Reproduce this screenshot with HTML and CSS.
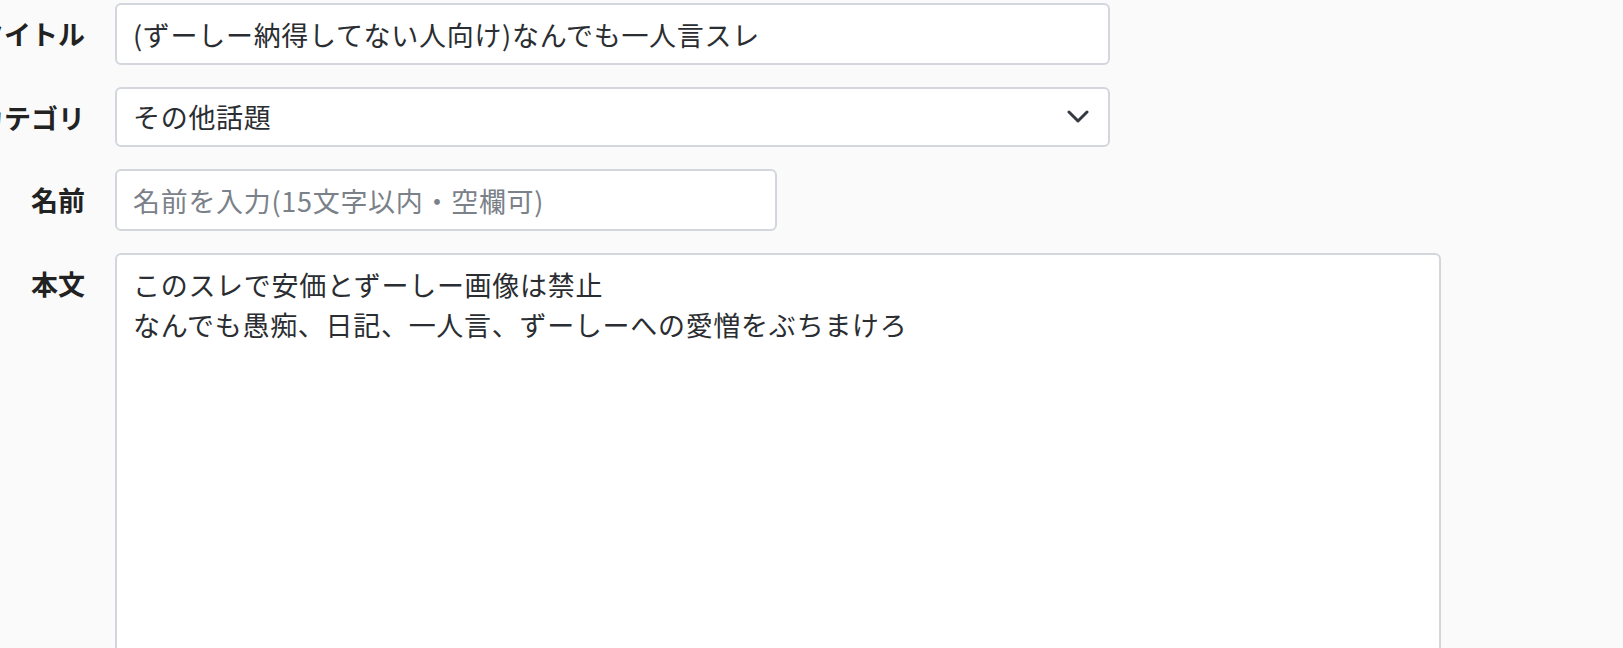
FILE: index.html
```html
<!DOCTYPE html>
<html lang="ja">
<head>
<meta charset="utf-8">
<title>スレ作成</title>
<link rel="stylesheet" href="styles.css">
</head>
<body>
<form class="form">
  <div class="row">
    <label class="label" for="title"><span>タイトル</span></label>
    <input id="title" class="control control-wide" type="text" value="(ずーしー納得してない人向け)なんでも一人言スレ">
  </div>
  <div class="row">
    <label class="label" for="cat"><span>カテゴリ</span></label>
    <div class="select-wrap control-wide">
      <select id="cat" class="control control-select">
        <option>その他話題</option>
      </select>
      <svg class="chevron" width="22" height="13" viewBox="0 0 22 13"><path d="M2 2 L11 11 L20 2" fill="none" stroke="#343a40" stroke-width="3" stroke-linecap="round" stroke-linejoin="round"/></svg>
    </div>
  </div>
  <div class="row">
    <label class="label" for="name"><span>名前</span></label>
    <input id="name" class="control control-name" type="text" placeholder="名前を入力(15文字以内・空欄可)">
  </div>
  <div class="row">
    <label class="label" for="body"><span>本文</span></label>
    <textarea id="body" class="control control-area">このスレで安価とずーしー画像は禁止
なんでも愚痴、日記、一人言、ずーしーへの愛憎をぶちまけろ</textarea>
  </div>
</form>
</body>
</html>
```

FILE: styles.css
```css
html, body {
  margin: 0;
  padding: 0;
  background: #fafafa;
  overflow: hidden;
}

body {
  font-family: "Noto Sans CJK JP", "Noto Sans", sans-serif;
  color: #212529;
}

.form {
  display: flex;
  flex-direction: column;
  gap: 22px;
  padding-top: 3px;
}

.row {
  display: flex;
  align-items: flex-start;
  gap: 30px;
}

.label {
  width: 85px;
  flex-shrink: 0;
  display: flex;
  justify-content: flex-end;
  white-space: nowrap;
  font-size: 27px;
  font-weight: 700;
  line-height: 40px;
  padding-top: 11px;
  color: #222;
}

.control {
  box-sizing: border-box;
  font-family: "Noto Sans CJK JP", "Noto Sans", sans-serif;
  font-size: 27px;
  letter-spacing: 0.7px;
  line-height: 40px;
  color: #2a2d31;
  background: #fff;
  border: 2px solid #d3d6dc;
  border-radius: 6px;
  padding: 9px 16px;
  height: 62px;
  margin: 0;
  outline: none;
}

.control::placeholder {
  color: #7b8189;
  opacity: 1;
}

.control-wide {
  width: 995px;
}

.select-wrap {
  position: relative;
  flex-shrink: 0;
}

.control-select {
  width: 100%;
  height: 60px;
  padding-top: 8px;
  padding-bottom: 8px;
  appearance: none;
  -webkit-appearance: none;
}

.chevron {
  position: absolute;
  right: 21px;
  top: 23px;
  pointer-events: none;
}

.control-name {
  width: 662px;
}

.control-area {
  width: 1326px;
  height: 440px;
  resize: none;
  padding-top: 10px;
  line-height: 40px;
}
```
